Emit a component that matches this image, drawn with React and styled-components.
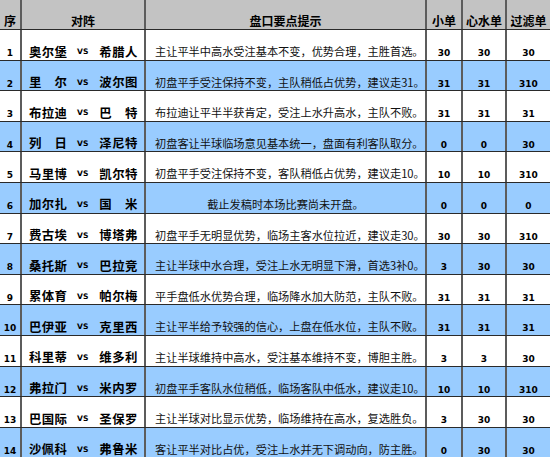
import React from "react";
import styled, { createGlobalStyle } from "styled-components";

const Global = createGlobalStyle`
  html, body { margin: 0; padding: 0; background: #fff; }
  body { width: 550px; height: 457px; overflow: hidden; }
`;

const COLS = "22px 124px 281px 36px 44px 43px";
const CJK = `"SimSun", "Noto Sans CJK SC", sans-serif`;

const Table = styled.div`
  width: 550px;
  display: flex;
  flex-direction: column;
`;

const Row = styled.div`
  display: grid;
  grid-template-columns: ${COLS};
  height: ${(p) => (p.$head ? "30px" : "30.6px")};
  box-sizing: border-box;
  border-bottom: 1px solid #2a2a2a;
  background: ${(p) => (p.$head ? "#c3c3c3" : p.$alt ? "#99ccff" : "#ffffff")};
`;

const Cell = styled.div`
  box-sizing: border-box;
  border-right: ${(p) => (p.$last ? "none" : "2px solid #5c5c5c")};
  display: flex;
  align-items: flex-start;
  justify-content: ${(p) => p.$justify || "center"};
  padding-top: ${(p) => (p.$head ? "15px" : "15px")};
  padding-left: ${(p) => p.$pl || "0"};
  line-height: 12px;
  white-space: nowrap;
  overflow: hidden;
`;

const HeadText = styled.span`
  font-family: ${CJK};
  font-weight: 700;
  font-size: 12px;
  color: #000;
`;

const Num = styled.span`
  font-family: "DejaVu Sans", Verdana, sans-serif;
  font-weight: 700;
  font-size: 9px;
  color: #000;
  padding-top: 2px;
`;

const Team = styled.div`
  display: flex;
  align-items: center;
  padding-left: 7px;
`;

const Name = styled.span`
  width: 38px;
  font-family: ${CJK};
  font-weight: 700;
  font-size: 12.4px;
  color: #000;
  display: flex;
  justify-content: space-between;
  margin-left: ${(p) => p.$ml || "0"};
`;

const Vs = styled.span`
  font-family: "DejaVu Sans", Verdana, sans-serif;
  font-weight: 700;
  font-size: 7.6px;
  color: #000;
  margin-left: 10px;
  padding-top: 1px;
`;

const Desc = styled.span`
  font-family: ${CJK};
  font-size: 11.2px;
  color: #111;
`;

const rows = [
  ["1", "奥尔堡", "希腊人", "主让平半中高水受注基本不变，优势合理，主胜首选。", "30", "30", "30"],
  ["2", "里尔", "波尔图", "初盘平手受注保持不变，主队稍低占优势，建议走31。", "31", "31", "310"],
  ["3", "布拉迪", "巴特", "布拉迪让平半半获肯定，受注上水升高水，主队不败。", "31", "31", "31"],
  ["4", "列日", "泽尼特", "初盘客让半球临场意见基本统一，盘面有利客队取分。", "0", "0", "30"],
  ["5", "马里博", "凯尔特", "初盘平手受注保持不变，客队稍低占优势，建议走10。", "10", "10", "310"],
  ["6", "加尔扎", "国米", "截止发稿时本场比赛尚未开盘。", "0", "0", "0", true],
  ["7", "费古埃", "博塔弗", "初盘平手无明显优势，临场主客水位拉近，建议走30。", "30", "30", "310"],
  ["8", "桑托斯", "巴拉竞", "主让半球中水合理，受注上水无明显下滑，首选3补0。", "3", "30", "30"],
  ["9", "累体育", "帕尔梅", "平手盘低水优势合理，临场降水加大防范，主队不败。", "31", "31", "31"],
  ["10", "巴伊亚", "克里西", "主让平半给予较强的信心，上盘在低水位，主队不败。", "31", "31", "31"],
  ["11", "科里蒂", "维多利", "主让半球维持中高水，受注基本维持不变，博胆主胜。", "3", "3", "30"],
  ["12", "弗拉门", "米内罗", "初盘平手客队水位稍低，临场客队中低水，建议走10。", "10", "10", "310"],
  ["13", "巴国际", "圣保罗", "主让半球对比显示优势，临场维持在高水，复选胜负。", "3", "30", "30"],
  ["14", "沙佩科", "弗鲁米", "客让平半对比占优，受注上水并无下调动向，防主胜。", "0", "30", "30"],
];

const Spread = ({ text, ml }) => (
  <Name $ml={ml}>
    {text.split("").map((c, i) => (
      <span key={i}>{c}</span>
    ))}
  </Name>
);

export default function App() {
  return (
    <>
      <Global />
      <Table>
        <Row $head>
          <Cell $head><HeadText>序</HeadText></Cell>
          <Cell $head><HeadText>对阵</HeadText></Cell>
          <Cell $head><HeadText>盘口要点提示</HeadText></Cell>
          <Cell $head><HeadText>小单</HeadText></Cell>
          <Cell $head><HeadText>心水单</HeadText></Cell>
          <Cell $head $last><HeadText>过滤单</HeadText></Cell>
        </Row>
        {rows.map((r, i) => (
          <Row key={r[0]} $alt={i % 2 === 1}>
            <Cell><Num>{r[0]}</Num></Cell>
            <Cell $justify="flex-start">
              <Team>
                <Spread text={r[1]} />
                <Vs>VS</Vs>
                <Spread text={r[2]} ml="11px" />
              </Team>
            </Cell>
            <Cell $justify={r[7] ? "center" : "flex-start"} $pl={r[7] ? "0" : "9px"}>
              <Desc>{r[3]}</Desc>
            </Cell>
            <Cell><Num>{r[4]}</Num></Cell>
            <Cell><Num>{r[5]}</Num></Cell>
            <Cell $last><Num>{r[6]}</Num></Cell>
          </Row>
        ))}
      </Table>
    </>
  );
}
